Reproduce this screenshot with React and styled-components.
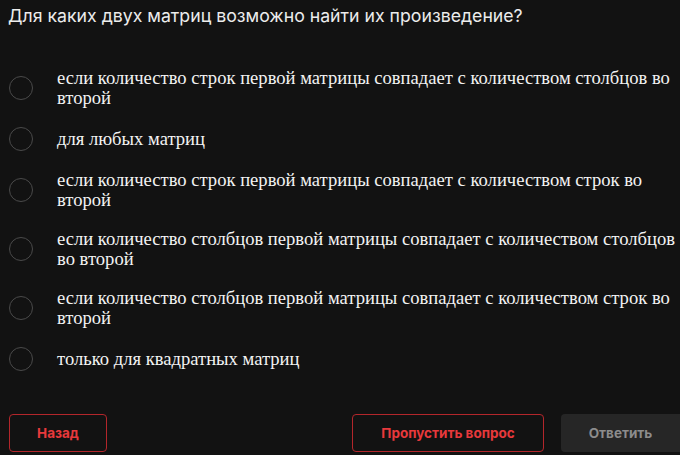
import React from "react";
import styled, { createGlobalStyle } from "styled-components";

const GlobalStyle = createGlobalStyle`
  html, body {
    margin: 0;
    padding: 0;
    background: #121212;
    overflow: hidden;
  }
`;

const answers = [
  "если количество строк первой матрицы совпадает с количеством столбцов во второй",
  "для любых матриц",
  "если количество строк первой матрицы совпадает с количеством строк во второй",
  "если количество столбцов первой матрицы совпадает с количеством столбцов во второй",
  "если количество столбцов первой матрицы совпадает с количеством строк во второй",
  "только для квадратных матриц",
];

export default function App() {
  return (
    <Page>
      <GlobalStyle />
      <Question>Для каких двух матриц возможно найти их произведение?</Question>
      <Options>
        {answers.map((a, i) => (
          <Option key={i}>
            <Radio />
            <OptionText>{a}</OptionText>
          </Option>
        ))}
      </Options>
      <Footer>
        <OutlineButton>Назад</OutlineButton>
        <RightGroup>
          <OutlineButton $wide>Пропустить вопрос</OutlineButton>
          <SubmitButton disabled>Ответить</SubmitButton>
        </RightGroup>
      </Footer>
    </Page>
  );
}

const Page = styled.div`
  width: 680px;
  height: 455px;
  box-sizing: border-box;
  padding: 6px 0 0 9px;
  display: flex;
  flex-direction: column;
  overflow: hidden;
`;

const Question = styled.h1`
  margin: 0 0 0 -1px;
  font-family: Inter, Roboto, "Noto Sans", sans-serif;
  font-weight: 400;
  font-size: 17.7px;
  line-height: 20px;
  color: #ececec;
`;

const Options = styled.div`
  margin-top: 42px;
  display: flex;
  flex-direction: column;
  gap: 19px;
`;

const Option = styled.label`
  display: flex;
  align-items: center;
  gap: 24px;
  cursor: pointer;
`;

const Radio = styled.span`
  flex: none;
  width: 22px;
  height: 22px;
  border-radius: 50%;
  border: 1.5px solid #4a4a4a;
`;

const OptionText = styled.span`
  flex: none;
  font-family: "Liberation Serif", "Times New Roman", serif;
  font-size: 18.6px;
  line-height: 20px;
  color: #f2f2f2;
  max-width: 634px;
`;

const Footer = styled.div`
  margin-top: auto;
  margin-bottom: 3px;
  display: flex;
  justify-content: space-between;
  align-items: center;
`;

const RightGroup = styled.div`
  display: flex;
  gap: 17px;
`;

const OutlineButton = styled.button`
  width: ${(p) => (p.$wide ? "192px" : "98px")};
  height: 38px;
  border: 1px solid #b3262b;
  border-radius: 4px;
  background: transparent;
  color: #e8393c;
  font-family: Inter, Roboto, sans-serif;
  font-weight: 700;
  font-size: 13.5px;
  cursor: pointer;
`;

const SubmitButton = styled.button`
  width: 119px;
  height: 38px;
  border: none;
  border-radius: 4px 0 0 4px;
  background: #262626;
  color: #8c8c8c;
  font-family: Inter, Roboto, sans-serif;
  font-weight: 700;
  font-size: 13.5px;
`;
